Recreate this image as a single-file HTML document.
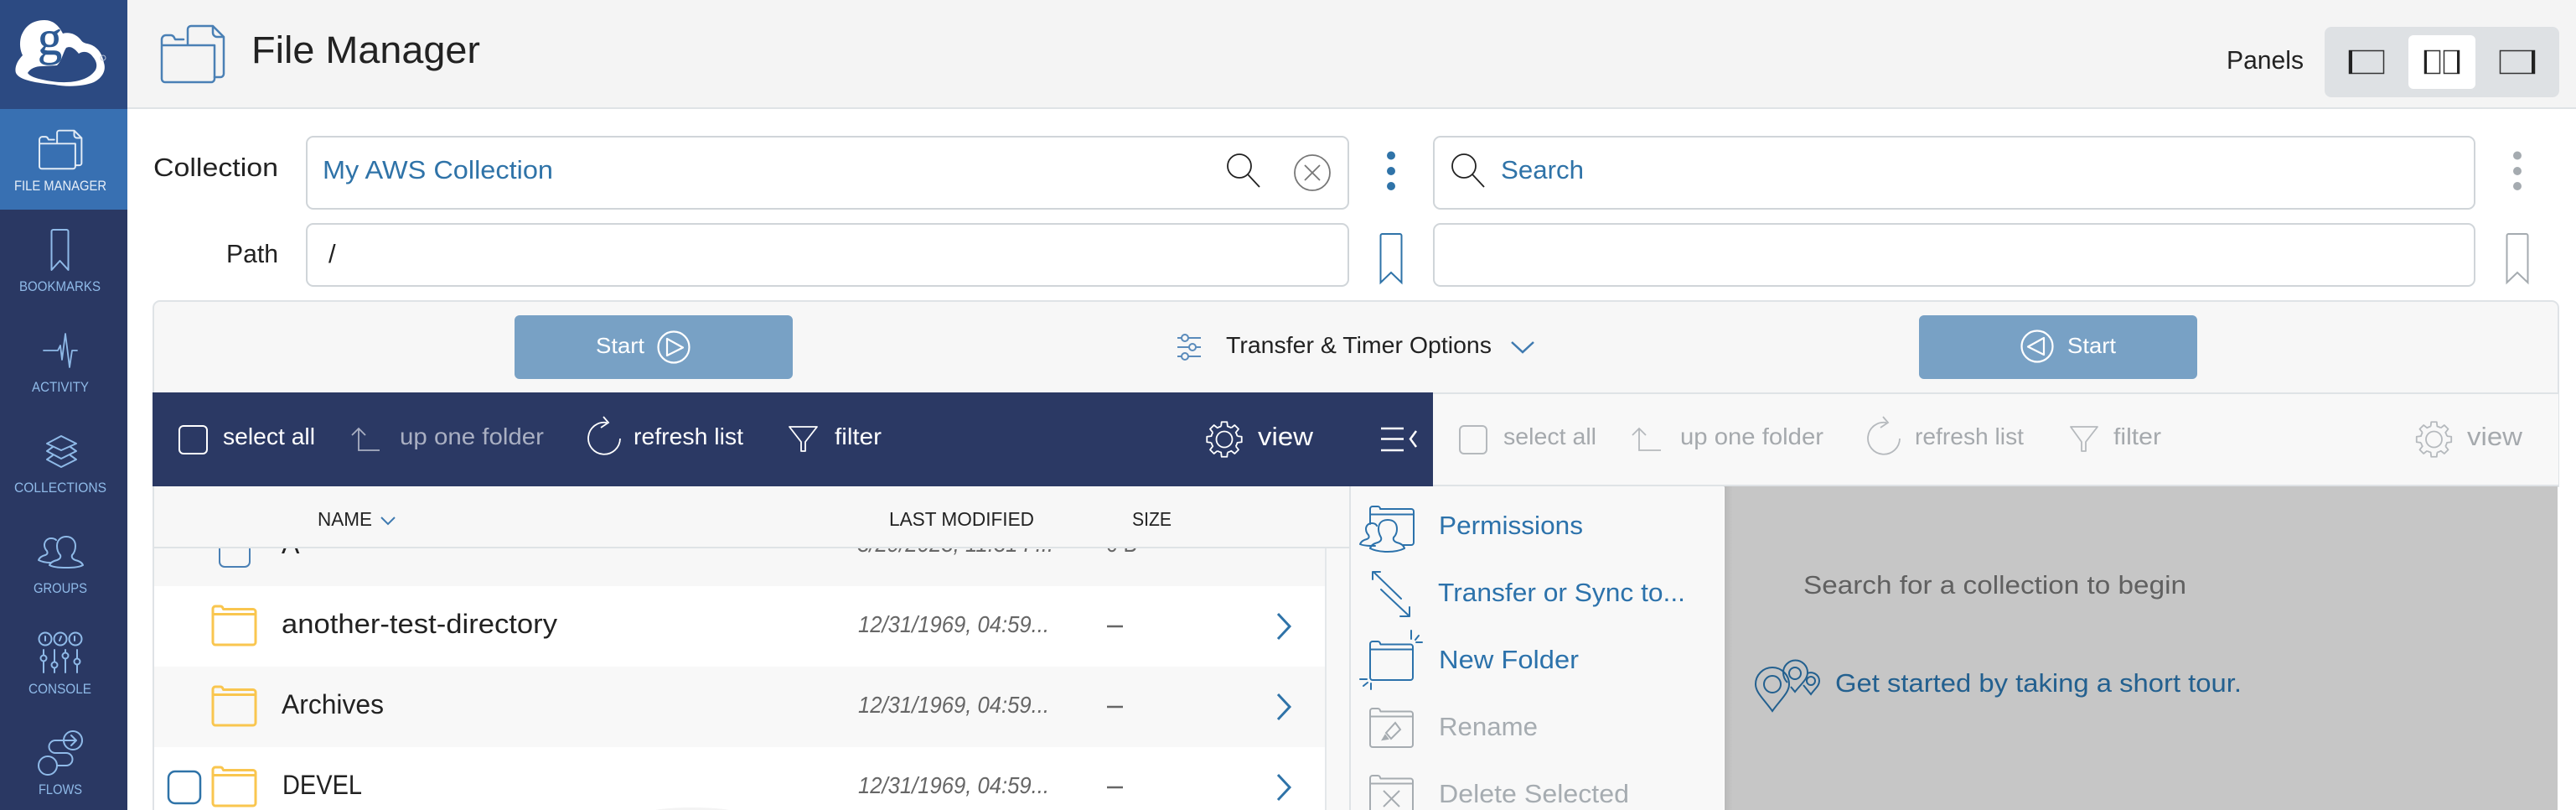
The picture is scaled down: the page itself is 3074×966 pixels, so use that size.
<!DOCTYPE html>
<html lang="en">
<head>
<meta charset="utf-8">
<title>File Manager</title>
<style>
html,body{margin:0;padding:0;background:#fff;width:3074px;height:966px;overflow:hidden}
svg{display:block}
text{font-family:"Liberation Sans",sans-serif;white-space:pre}
</style>
</head>
<body>
<svg xmlns="http://www.w3.org/2000/svg" width="3074" height="966" viewBox="0 0 3074 966">
<defs>
  <g id="folder" fill="none" stroke-linejoin="round">
    <path d="M1 10V4a3 3 0 0 1 3-3h6a3 3 0 0 1 3 2.500L13.500 4.500H49a3 3 0 0 1 3 3V44a3 3 0 0 1-3 3H4a3 3 0 0 1-3-3ZM1 10.500H52"/>
  </g>
  <g id="ff" fill="none" stroke-linejoin="round" stroke-linecap="round">
    <path d="M193 53V47a5 5 0 0 1 5-5h6a5 5 0 0 1 4 3l1 2h10M193 54H256V94a4 4 0 0 1-4 4H197a4 4 0 0 1-4-4V54"/>
    <path d="M224 53V35a4 4 0 0 1 4-4h26l13 13v44a4 4 0 0 1-4 4h-7M254 31v8a5 5 0 0 0 5 5h8"/>
  </g>
  <g id="gt"><path d="M-3.870-15.520L-3.290-20.740H3.290L3.870-15.520A16 16 0 0 1 8.240-13.710" fill="none" stroke-linejoin="round"/></g>
  <g id="gear" fill="none">
    <use href="#gt"/><use href="#gt" transform="rotate(45)"/><use href="#gt" transform="rotate(90)"/><use href="#gt" transform="rotate(135)"/>
    <use href="#gt" transform="rotate(180)"/><use href="#gt" transform="rotate(225)"/><use href="#gt" transform="rotate(270)"/><use href="#gt" transform="rotate(315)"/>
    <circle r="9.500"/>
  </g>
  <g id="search" fill="none"><circle cx="0" cy="0" r="14"/><path d="M10 10L24 25"/></g>
  <linearGradient id="sh" x1="0" x2="1" y1="0" y2="0"><stop offset="0" stop-color="#b9b9b9"/><stop offset="1" stop-color="#c6c6c6"/></linearGradient>
</defs>

<!-- header -->
<rect x="152" y="0" width="2922" height="128" fill="#f4f4f4"/>
<rect x="152" y="128" width="2922" height="2" fill="#dfe3e6"/>
<use href="#ff" stroke="#4a80b5" stroke-width="2.500"/>
<text x="300" y="75" font-size="45" fill="#222" textLength="273" lengthAdjust="spacingAndGlyphs">File Manager</text>
<text x="2657" y="82" font-size="31" fill="#222" textLength="92" lengthAdjust="spacingAndGlyphs">Panels</text>
<rect x="2774" y="32" width="280" height="84" rx="8" fill="#dee1e4"/>
<rect x="2874" y="42" width="80" height="64" rx="6" fill="#fff"/>
<g fill="none" stroke="#333" stroke-width="1.500">
  <rect x="2803.500" y="60.500" width="41" height="27"/>
  <rect x="2893.500" y="60.500" width="18" height="27"/><rect x="2916.500" y="60.500" width="18" height="27"/>
  <rect x="2983.500" y="60.500" width="41" height="27"/>
</g>
<g fill="#222"><rect x="2803" y="60" width="4" height="28"/><rect x="2893" y="60" width="3" height="28"/><rect x="2932" y="60" width="3" height="28"/><rect x="3021" y="60" width="4" height="28"/></g>

<!-- sidebar -->
<rect x="0" y="0" width="152" height="966" fill="#2a3863"/>
<rect x="0" y="0" width="152" height="130" fill="#2c4a82"/>
<rect x="0" y="130" width="152" height="120" fill="#3870b2"/>
<!-- logo -->
<path d="M53 24C38 24 29 32 25 44C23 52 24 60 27 66C21 72 17 80 19 87C23 96 45 99 65 101C80 104 100 103 112 98C122 93 127 84 124 75C122 65 118 58 110 54C104 51 100 53 96 47C90 40 82 38 75 40C70 30 63 24 53 24Z" fill="#fff"/>
<path d="M79 57C85 54 90 59 94 64C100 60 107 62 111 68C117 75 116 82 112 86C103 97 82 100 62 97C48 95 36 92 33 87C36 82 42 79 50 79L68 78C74 72 75 63 79 57Z" fill="#2c4a82"/>
<text x="45" y="65" font-size="58" stroke="#2c5a94" stroke-width=".6" style="font-family:'Liberation Serif',serif" fill="#2c5a94">g</text>
<circle cx="123" cy="69" r="3" fill="none" stroke="#b8c4d8" stroke-width="1"/>

<use href="#ff" stroke="#e3ecf6" stroke-width="2.900" transform="translate(-84.200 134.600) scale(.68)"/>
<g font-size="16.500" fill="#8fbae8">
  <text x="17" y="227" fill="#e6eef8" textLength="110" lengthAdjust="spacingAndGlyphs">FILE MANAGER</text>
  <text x="23" y="347" textLength="97" lengthAdjust="spacingAndGlyphs">BOOKMARKS</text>
  <text x="38" y="467" textLength="68" lengthAdjust="spacingAndGlyphs">ACTIVITY</text>
  <text x="17" y="587" textLength="110" lengthAdjust="spacingAndGlyphs">COLLECTIONS</text>
  <text x="40" y="707" textLength="64" lengthAdjust="spacingAndGlyphs">GROUPS</text>
  <text x="34" y="827" textLength="75" lengthAdjust="spacingAndGlyphs">CONSOLE</text>
  <text x="46" y="947" textLength="52" lengthAdjust="spacingAndGlyphs">FLOWS</text>
</g>
<g fill="none" stroke="#8fbae8" stroke-width="2" stroke-linejoin="round" stroke-linecap="round">
  <path d="M61.500 276a2 2 0 0 1 2-2h16a2 2 0 0 1 2 2v46l-10-11-10 11Z"/>
  <path d="M52 418H69L72 412L74 429L78 398L83 438L86 418H92" stroke-width="1.800"/>
  <path d="M73 520L91 529L73 537L56 529ZM63 533L56 538L73 547L91 538L84 533M63 543L56 548L73 557L91 548L84 543"/>
  <path d="M79 640c-7 0-11 5-11 11c0 5 2 9 4 11c1 3-1 5-4 6c-4 1-8 3-9 6c6 3 14 3 20 3s14 0 20-3c-1-3-5-5-9-6c-3-1-5-3-4-6c2-2 4-6 4-11c0-6-4-11-11-11Z"/>
  <path d="M60 671c-5 0-10-1-14-3c1-3 4-5 8-6c3-1 3-3 2-5c-2-2-3-4-3-7c0-4 3-8 8-8c3 0 5 1 6 2"/>
  <circle cx="54" cy="762" r="7.500"/><circle cx="72" cy="762" r="7.500"/><circle cx="90" cy="762" r="7.500"/>
  <path d="M54 759v5M73 759l-2 5M89 759v5"/>
  <path d="M52 775V781M52 789V802M65 775V789M65 797V802M78 775V778M78 786V802M92 775V785M92 793V802"/>
  <circle cx="52" cy="785" r="3.500"/><circle cx="65" cy="793" r="3.500"/><circle cx="78" cy="782" r="3.500"/><circle cx="92" cy="789" r="3.500"/>
  <circle cx="87" cy="883" r="11"/><circle cx="57" cy="913" r="11"/>
  <path d="M77 883H90M85 877L91 883L85 889"/>
  <path d="M76 883H66a7.500 7.500 0 0 0 0 15H79a7.500 7.500 0 0 1 0 15H68"/>
</g>

<!-- collection inputs -->
<text x="183" y="210" font-size="31" fill="#222" textLength="149" lengthAdjust="spacingAndGlyphs">Collection</text>
<text x="270" y="313" font-size="31" fill="#222" textLength="62" lengthAdjust="spacingAndGlyphs">Path</text>
<g fill="#fff" stroke="#d0d5d9" stroke-width="2">
  <rect x="366" y="163" width="1243" height="86" rx="8"/>
  <rect x="366" y="267" width="1243" height="74" rx="8"/>
  <rect x="1711" y="163" width="1242" height="86" rx="8"/>
  <rect x="1711" y="267" width="1242" height="74" rx="8"/>
</g>
<text x="385" y="213" font-size="31" fill="#2f73a8" textLength="275" lengthAdjust="spacingAndGlyphs">My AWS Collection</text>
<text x="392" y="313" font-size="31" fill="#222">/</text>
<text x="1791" y="213" font-size="31" fill="#2f73a8" textLength="99" lengthAdjust="spacingAndGlyphs">Search</text>
<use href="#search" x="1479" y="198" stroke="#222" stroke-width="1.800"/>
<use href="#search" x="1747" y="198" stroke="#222" stroke-width="1.800"/>
<circle cx="1566" cy="206" r="21" fill="none" stroke="#777" stroke-width="1.800"/>
<path d="M1557 197L1575 215M1575 197L1557 215" stroke="#777" stroke-width="1.800" fill="none"/>
<g fill="#2f73a8"><circle cx="1660" cy="185.500" r="5"/><circle cx="1660" cy="204" r="5"/><circle cx="1660" cy="222" r="5"/></g>
<g fill="#a5abb0"><circle cx="3004" cy="185.500" r="5"/><circle cx="3004" cy="204" r="5"/><circle cx="3004" cy="222" r="5"/></g>
<path d="M1647.500 281a2 2 0 0 1 2-2h21a2 2 0 0 1 2 2v56l-12.500-12-12.500 12Z" fill="none" stroke="#2f73a8" stroke-width="2"/>
<path d="M2991.500 281a2 2 0 0 1 2-2h21a2 2 0 0 1 2 2v56l-12.500-12-12.500 12Z" fill="none" stroke="#a5abb0" stroke-width="2"/>

<!-- transfer panel -->
<path d="M183 580V367a8 8 0 0 1 8-8H3045a8 8 0 0 1 8 8V580Z" fill="#f7f7f7" stroke="#dfe3e6" stroke-width="2"/>
<rect x="614" y="376" width="332" height="76" rx="6" fill="#78a1c5"/>
<rect x="2290" y="376" width="332" height="76" rx="6" fill="#78a1c5"/>
<text x="711" y="421" font-size="26" fill="#fff" textLength="58" lengthAdjust="spacingAndGlyphs">Start</text>
<text x="2467" y="421" font-size="26" fill="#fff" textLength="58" lengthAdjust="spacingAndGlyphs">Start</text>
<g fill="none" stroke="#fff" stroke-width="2.200" stroke-linejoin="round">
  <circle cx="804" cy="414" r="18.500"/><path d="M796 404L815 414.500L796 424Z"/>
  <circle cx="2431" cy="413" r="18.500"/><path d="M2439 403L2420 413.500L2439 423Z"/>
</g>
<g fill="none" stroke="#5a8bbb" stroke-width="2">
  <path d="M1405 403H1410M1418 403H1433M1405 414H1419M1427 414H1433M1405 425H1410M1418 425H1433"/>
  <circle cx="1414" cy="403" r="4"/><circle cx="1423" cy="414" r="4"/><circle cx="1414" cy="425" r="4"/>
</g>
<text x="1463" y="421" font-size="27.500" fill="#222" textLength="317" lengthAdjust="spacingAndGlyphs">Transfer &amp; Timer Options</text>
<path d="M1804 408L1817 420L1830 408" fill="none" stroke="#3f7ab0" stroke-width="2.500"/>

<!-- left toolbar -->
<rect x="182" y="468" width="1528" height="112" fill="#2b3964"/>
<rect x="214" y="508" width="33" height="33" rx="5" fill="none" stroke="#fff" stroke-width="2"/>
<g font-size="28" fill="#fff">
  <text x="266" y="530" textLength="110" lengthAdjust="spacingAndGlyphs">select all</text>
  <text x="477" y="530" fill="#a9afc2" textLength="172" lengthAdjust="spacingAndGlyphs">up one folder</text>
  <text x="756" y="530" textLength="131" lengthAdjust="spacingAndGlyphs">refresh list</text>
  <text x="996" y="530" textLength="56" lengthAdjust="spacingAndGlyphs">filter</text>
  <text x="1501" y="531" font-size="31" textLength="66" lengthAdjust="spacingAndGlyphs">view</text>
</g>
<path d="M420 519L428 511L436 519M428 511V537H453" fill="none" stroke="#a9afc2" stroke-width="1.800"/>
<path d="M724 504A19 19 0 1 0 740 523M720 497L726 504L717 510" fill="none" stroke="#fff" stroke-width="1.800"/>
<path d="M942 509H975L961 527V538H956V527Z" fill="none" stroke="#fff" stroke-width="1.800" stroke-linejoin="round"/>
<use href="#gear" x="1461" y="524" stroke="#fff" stroke-width="1.800"/>
<path d="M1648 511H1675M1648 523.500H1675M1648 537H1675" stroke="#fff" stroke-width="2.500" fill="none"/>
<path d="M1690 514L1683 523.500L1690 533" stroke="#fff" stroke-width="2.500" fill="none"/>

<!-- right toolbar -->
<rect x="1710" y="469" width="1343" height="111" fill="#f8f8f8"/>
<path d="M1710 469H3053M1710 579H3053" stroke="#dfe3e6" stroke-width="2"/>
<rect x="1742" y="508" width="32" height="33" rx="5" fill="none" stroke="#b5b9bd" stroke-width="2"/>
<g font-size="28" fill="#a5a9ad">
  <text x="1794" y="530" textLength="111" lengthAdjust="spacingAndGlyphs">select all</text>
  <text x="2005" y="530" textLength="171" lengthAdjust="spacingAndGlyphs">up one folder</text>
  <text x="2285" y="530" textLength="130" lengthAdjust="spacingAndGlyphs">refresh list</text>
  <text x="2522" y="530" textLength="57" lengthAdjust="spacingAndGlyphs">filter</text>
  <text x="2944" y="531" font-size="31" textLength="66" lengthAdjust="spacingAndGlyphs">view</text>
</g>
<path d="M1948 519L1956 511L1964 519M1956 511V537H1982" fill="none" stroke="#b5b9bd" stroke-width="1.800"/>
<path d="M2251 504A19 19 0 1 0 2267 523M2247 497L2253 504L2244 510" fill="none" stroke="#b5b9bd" stroke-width="1.800"/>
<path d="M2471 509H2503L2489 527V538H2484V527Z" fill="none" stroke="#b5b9bd" stroke-width="1.800" stroke-linejoin="round"/>
<use href="#gear" x="2904.500" y="524" stroke="#b5b9bd" stroke-width="1.800"/>

<!-- right panel empty -->
<rect x="2058" y="580" width="994" height="386" fill="#c6c6c6"/>
<rect x="2058" y="580" width="10" height="386" fill="url(#sh)"/>
<text x="2152" y="708" font-size="31" fill="#606060" textLength="457" lengthAdjust="spacingAndGlyphs">Search for a collection to begin</text>
<text x="2190" y="825" font-size="31" fill="#23608f" textLength="485" lengthAdjust="spacingAndGlyphs">Get started by taking a short tour.</text>
<g fill="none" stroke="#23608f" stroke-width="2">
  <path d="M2115 848C2105 834 2095 826 2095 816A20 20 0 0 1 2135 816C2135 826 2125 834 2115 848Z"/>
  <circle cx="2115" cy="816" r="10"/>
  <path d="M2133 814C2129 810 2128 806 2128 802A14.500 14.500 0 0 1 2157 802C2157 810 2150 815 2142 825L2137 819"/>
  <circle cx="2142" cy="803" r="7"/>
  <path d="M2157 803A10 10 0 0 1 2171 812C2171 818 2166 821 2161 828L2152 817"/>
  <circle cx="2161" cy="812" r="5"/>
</g>

<!-- file list -->
<rect x="184" y="580" width="1426" height="386" fill="#f8f8f8"/>
<rect x="184" y="654" width="1397" height="45" fill="#f7f7f7"/>
<rect x="184" y="699" width="1397" height="96" fill="#fff"/>
<rect x="184" y="795" width="1397" height="96" fill="#f8f8f8"/>
<rect x="184" y="891" width="1397" height="75" fill="#fff"/>
<rect x="182" y="580" width="2" height="386" fill="#dfe3e6"/>
<rect x="1581" y="654" width="2" height="312" fill="#e4e7ea"/>
<ellipse cx="826" cy="969" rx="50" ry="6" fill="#f3f3f3"/>

<rect x="262" y="640" width="36" height="36" rx="6" fill="none" stroke="#4a80b5" stroke-width="2"/>
<text x="336" y="660" font-size="32" fill="#222">A</text>
<text x="1023" y="658" font-size="28" font-style="italic" fill="#666" textLength="234" lengthAdjust="spacingAndGlyphs">3/29/2023, 11:31 P...</text>
<text x="1320" y="658" font-size="28" fill="#666" textLength="37" lengthAdjust="spacingAndGlyphs">0 B</text>

<g stroke="#f9c64f" stroke-width="3">
  <use href="#folder" x="253" y="722"/>
  <use href="#folder" x="253" y="818"/>
  <use href="#folder" x="253" y="914"/>
</g>
<rect x="201" y="920" width="38" height="38" rx="8" fill="#fff" stroke="#2f73a8" stroke-width="2.500"/>
<g font-size="32" fill="#222">
  <text x="336" y="755" textLength="329" lengthAdjust="spacingAndGlyphs">another-test-directory</text>
  <text x="336" y="851" textLength="122" lengthAdjust="spacingAndGlyphs">Archives</text>
  <text x="337" y="947" textLength="95" lengthAdjust="spacingAndGlyphs">DEVEL</text>
</g>
<g font-size="28" font-style="italic" fill="#666">
  <text x="1024" y="754" textLength="228" lengthAdjust="spacingAndGlyphs">12/31/1969, 04:59...</text>
  <text x="1024" y="850" textLength="228" lengthAdjust="spacingAndGlyphs">12/31/1969, 04:59...</text>
  <text x="1024" y="946" textLength="228" lengthAdjust="spacingAndGlyphs">12/31/1969, 04:59...</text>
</g>
<path d="M1321 747H1340M1321 843H1340M1321 939H1340" stroke="#666" stroke-width="2.500" fill="none"/>
<path d="M1525 732L1539 747L1525 762M1525 828L1539 843L1525 858M1525 924L1539 939L1525 954" stroke="#2f73a8" stroke-width="3" fill="none"/>

<!-- file list header -->
<rect x="184" y="580" width="1426" height="72" fill="#f7f7f7"/>
<rect x="184" y="652" width="1426" height="2" fill="#dfe3e6"/>
<g font-size="23.500" fill="#222">
  <text x="379" y="627" textLength="65" lengthAdjust="spacingAndGlyphs">NAME</text>
  <text x="1061" y="627" textLength="173" lengthAdjust="spacingAndGlyphs">LAST MODIFIED</text>
  <text x="1351" y="627" textLength="47" lengthAdjust="spacingAndGlyphs">SIZE</text>
</g>
<path d="M455 617L463 625L471 617" fill="none" stroke="#3f7ab0" stroke-width="2"/>

<!-- context menu -->
<rect x="1612" y="580" width="445" height="386" fill="#f8f8f8"/>
<rect x="1610" y="580" width="2" height="386" fill="#dfe3e6"/>
<g font-size="31" fill="#2c72ab">
  <text x="1717" y="637" textLength="172" lengthAdjust="spacingAndGlyphs">Permissions</text>
  <text x="1716" y="717" textLength="295" lengthAdjust="spacingAndGlyphs">Transfer or Sync to...</text>
  <text x="1717" y="797" textLength="167" lengthAdjust="spacingAndGlyphs">New Folder</text>
  <text x="1717" y="877" fill="#a6acb1" textLength="118" lengthAdjust="spacingAndGlyphs">Rename</text>
  <text x="1717" y="957" fill="#a6acb1" textLength="227" lengthAdjust="spacingAndGlyphs">Delete Selected</text>
</g>
<g fill="none" stroke="#2c72ab" stroke-width="2" stroke-linejoin="round" stroke-linecap="round">
  <path d="M1635 625V607a3 3 0 0 1 3-3h6a3 3 0 0 1 3 3h37a3 3 0 0 1 3 3V647a3 3 0 0 1-3 3H1674M1635 613.500H1687"/>
  <path d="M1656 620c-7 0-11 4-11 11c0 5 2 8 3 10c1 3-1 5-4 6c-4 1-8 3-9 7c6 3 14 4 21 4s14-1 20-4c-1-4-5-6-9-7c-3-1-5-3-4-6c2-2 4-5 4-10c0-7-4-11-11-11Z" fill="#f8f8f8"/>
  <path d="M1641 651c-7 0-13 0-18-2c1-3 4-5 8-6c3-1 3-3 2-5c-2-2-3-4-3-7c0-4 3-7 7-7c3 0 5 1 6 3"/>
  <path d="M1639 682L1672 714M1647 682H1638V691M1648 703L1682 735M1671 735H1682V724"/>
  <path d="M1684 752V762M1693 758L1689 763M1690 766H1697M1623 810H1631M1627 818L1632 814M1636 815V822"/>
</g>
<use href="#folder" transform="translate(1634 764)" stroke="#2c72ab" stroke-width="2"/>
<g stroke="#a6acb1" stroke-width="2" fill="none">
  <use href="#folder" transform="translate(1634 844)"/>
  <use href="#folder" transform="translate(1634 924)"/>
  <path d="M1665 862L1671 870L1660 881L1654 874Z"/>
  <path d="M1650 882L1653 877L1656 881Z" fill="#a6acb1"/>
  <path d="M1651 943L1670 962M1670 943L1651 962"/>
</g>
</svg>
</body>
</html>
